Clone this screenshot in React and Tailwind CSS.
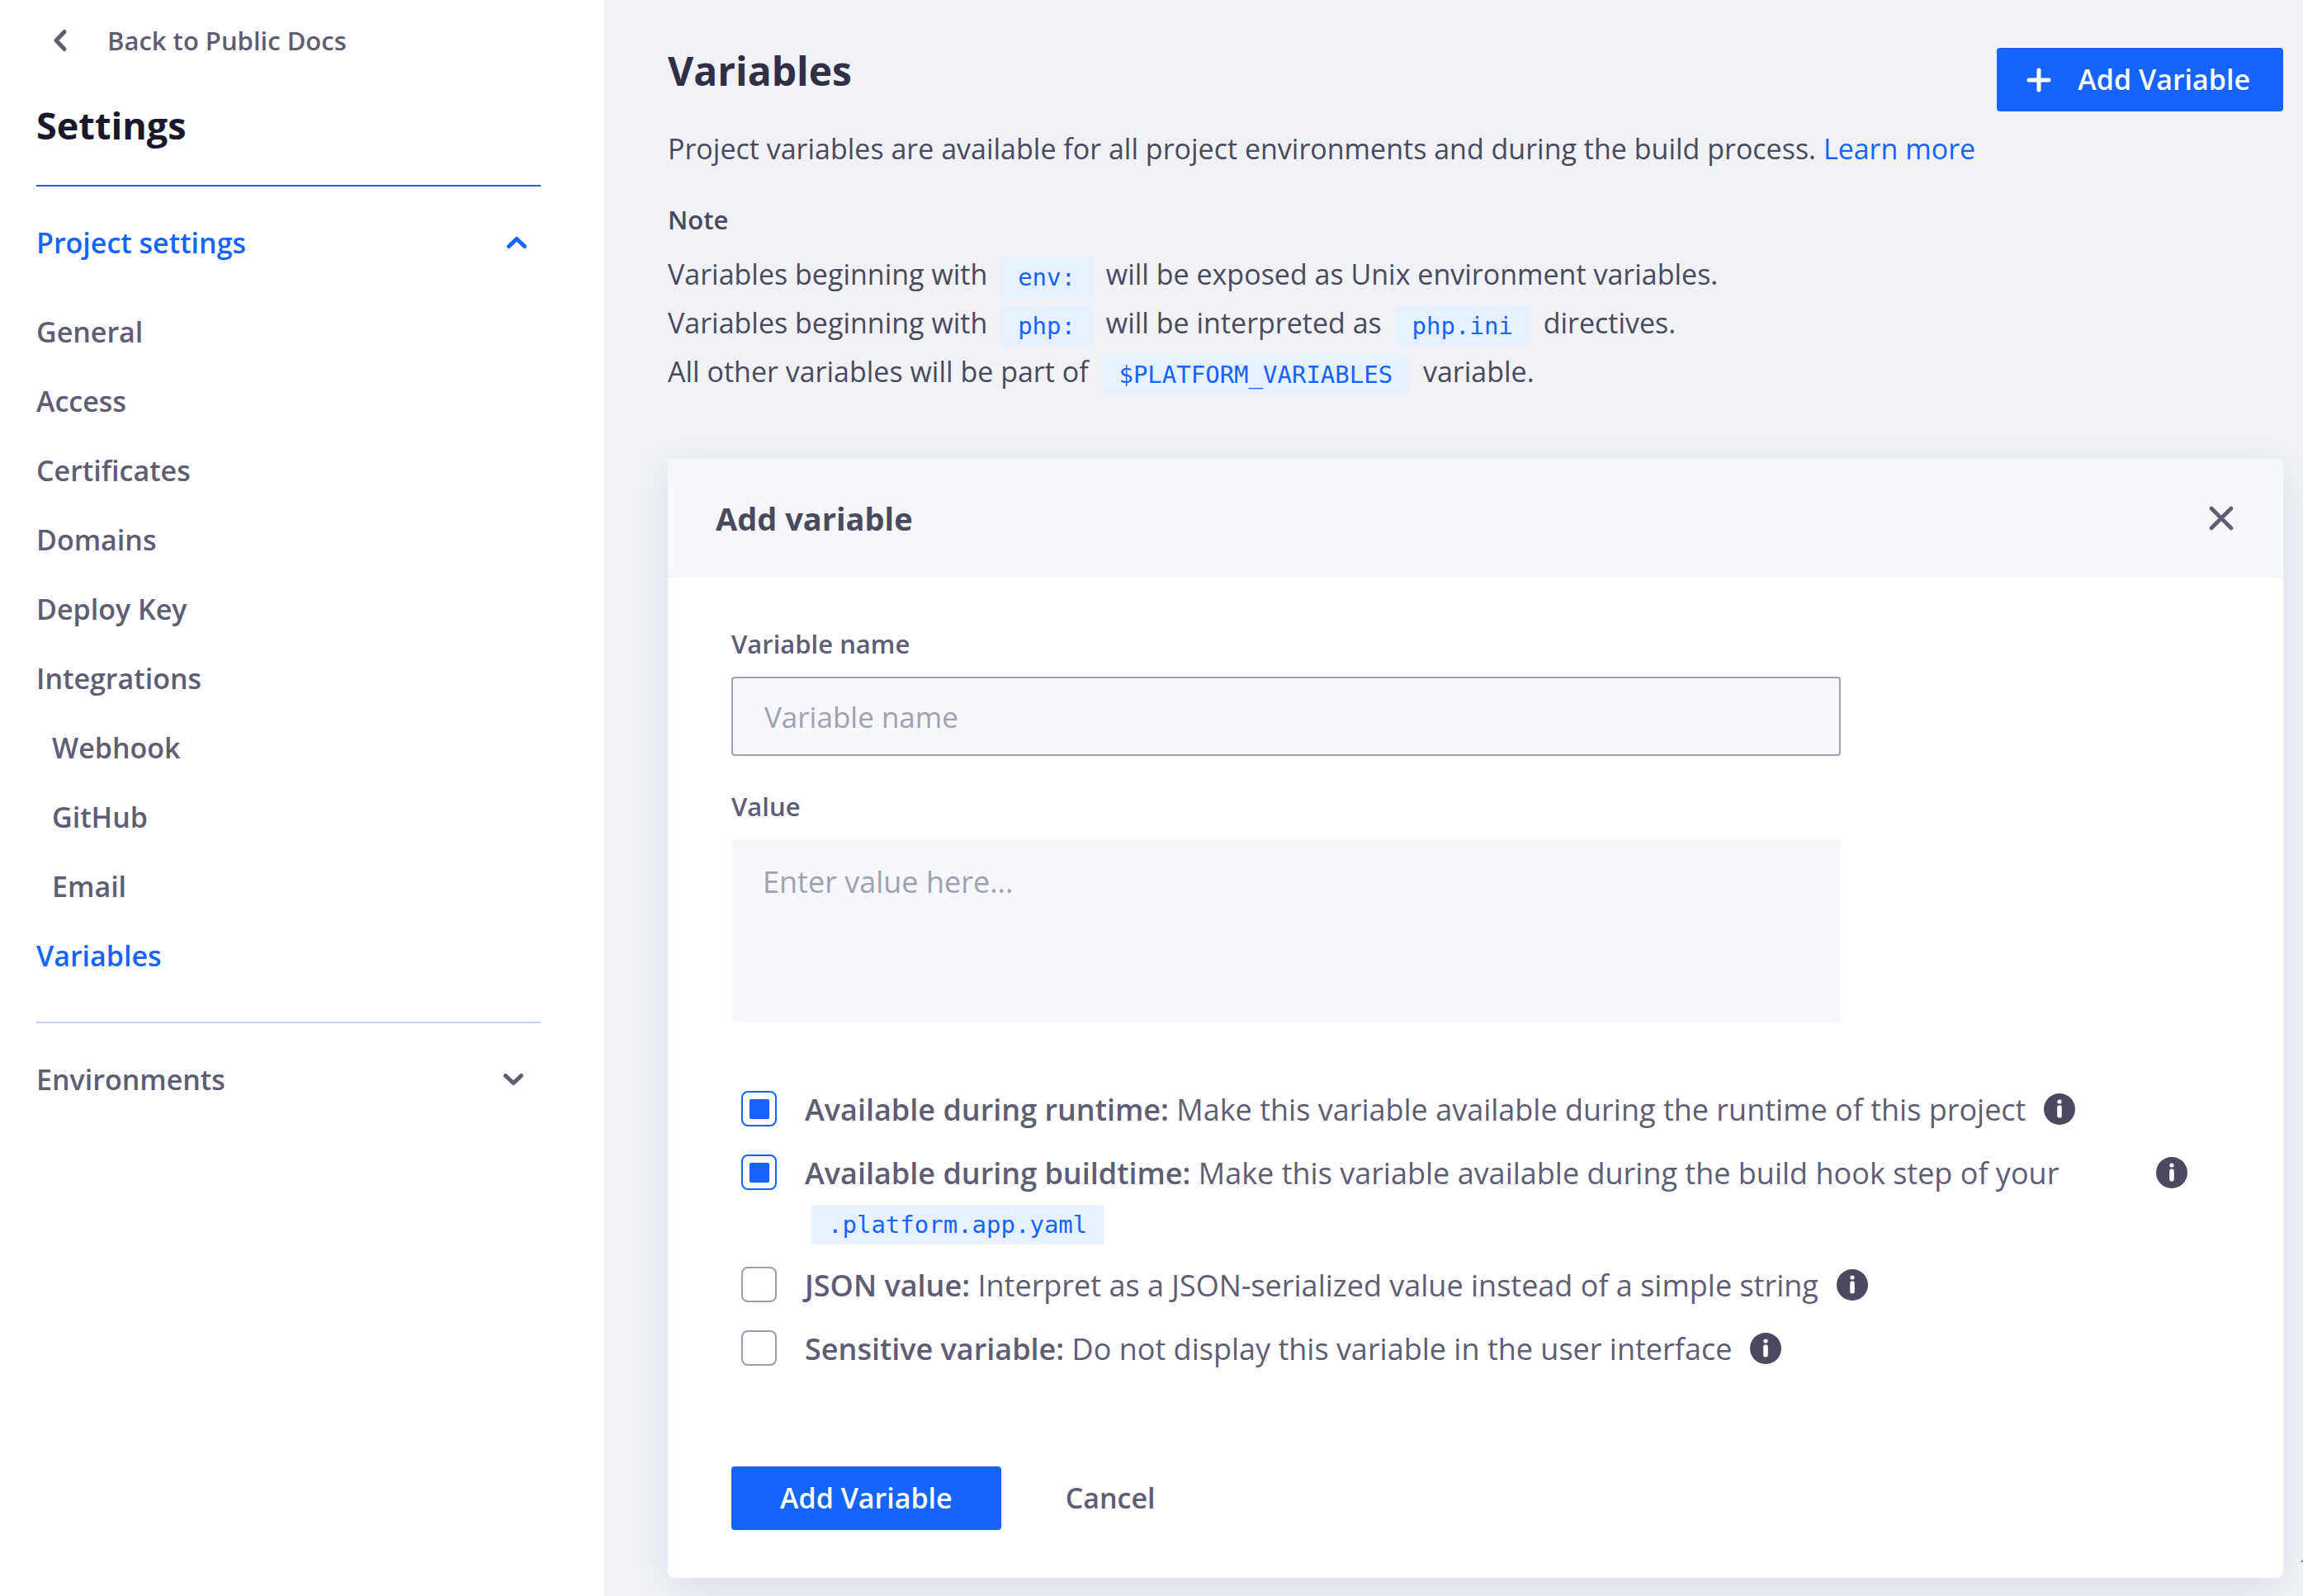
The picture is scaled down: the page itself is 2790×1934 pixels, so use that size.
const navItems = [
  { label: "General" },
  { label: "Access" },
  { label: "Certificates" },
  { label: "Domains" },
  { label: "Deploy Key" },
  { label: "Integrations" },
  { label: "Webhook", nested: true },
  { label: "GitHub", nested: true },
  { label: "Email", nested: true },
  { label: "Variables", active: true },
];

const options = [
  { id: "runtime", title: "Available during runtime:", text: "Make this variable available during the runtime of this project", checked: true },
  { id: "buildtime", title: "Available during buildtime:", text: "Make this variable available during the build hook step of your", code: ".platform.app.yaml", checked: true },
  { id: "json", title: "JSON value:", text: "Interpret as a JSON-serialized value instead of a simple string" },
  { id: "sensitive", title: "Sensitive variable:", text: "Do not display this variable in the user interface" },
];

function Code({ children }) {
  return (
    <code className="mx-2 inline-block rounded-[4px] bg-[#e6f0ff] px-5 align-middle font-['DejaVu_Sans_Mono',monospace] text-[29px] leading-[48px] text-[#1564ff]">
      {children}
    </code>
  );
}

function Chevron({ className }) {
  return (
    <svg viewBox="0 0 26 16" className={className} fill="none" stroke="currentColor" strokeWidth="5" strokeLinecap="round" strokeLinejoin="round" aria-hidden="true">
      <path d="M3.5 12.5 L13 3.5 L22.5 12.5" />
    </svg>
  );
}

function InfoIcon() {
  return (
    <svg viewBox="0 0 38 38" className="size-[38px]" aria-hidden="true">
      <circle cx="19" cy="19" r="19" fill="#4a495e" />
      <circle cx="19" cy="10" r="2.6" fill="#fff" />
      <rect x="16.2" y="14.5" width="5.6" height="15" rx="2.2" fill="#fff" />
    </svg>
  );
}

function Sidebar() {
  return (
    <aside className="w-[732px] shrink-0 bg-white pr-[77px] pl-11 text-[34px] font-semibold text-[#5e5d73]">
      <a href="#docs" className="flex items-center pt-6 pl-5 text-[31px] leading-[50px] font-semibold">
        <svg viewBox="0 0 18 30" className="mr-12 h-[30px] w-[18px]" fill="none" stroke="currentColor" strokeWidth="5" strokeLinecap="round" strokeLinejoin="round" aria-hidden="true">
          <path d="M14 4.5 L4 15 L14 25.5" />
        </svg>
        Back to Public Docs
      </a>
      <h1 className="pt-12 pb-[42px] text-[45px] leading-[60px] font-bold text-[#1a192b]">Settings</h1>
      <section className="border-t-2 border-[#1564ff]">
        <button type="button" aria-expanded="true" className="flex w-full items-center justify-between pt-11 pr-4 text-left leading-12 font-semibold text-[#1564ff]">
          Project settings
          <Chevron className="h-4 w-[26px]" />
        </button>
        <nav className="pt-[42px] pb-[38px]">
          {navItems.map((item) => (
            <a
              key={item.label}
              href={"#" + item.label}
              className={
                "block leading-[84px] " +
                (item.nested ? "pl-[19px] " : "") +
                (item.active ? "text-[#1564ff]" : "")
              }
            >
              {item.label}
            </a>
          ))}
        </nav>
      </section>
      <section className="border-t-2 border-[#c9d0e4]">
        <button type="button" aria-expanded="false" className="flex w-full items-center justify-between pt-11 pr-5 text-left leading-12 font-semibold">
          Environments
          <Chevron className="h-4 w-[26px] rotate-180" />
        </button>
      </section>
    </aside>
  );
}

function OptionRow({ option }) {
  return (
    <div className="flex items-start">
      <input
        id={option.id}
        type="checkbox"
        defaultChecked={option.checked}
        className="mt-[17px] mr-[34px] grid size-[43px] shrink-0 appearance-none place-items-center rounded-[8px] border-2 border-[#98a0ae] before:size-6 before:rounded-[2px] checked:border-[#1564ff] checked:before:bg-[#1564ff]"
      />
      <label htmlFor={option.id} className="pt-[9px] pb-[7px] leading-[61px]">
        <span className="font-semibold">{option.title}</span> {option.text}
        {option.code && <span className="-mt-[2px] block"><Code>{option.code}</Code></span>}
      </label>
      <button type="button" aria-label={"About " + option.title} className={option.code ? "mt-5 ml-[118px]" : "mt-5 ml-[22px]"}>
        <InfoIcon />
      </button>
    </div>
  );
}

export default function App() {
  return (
    <div className="relative flex min-h-screen bg-[#f0f2f6] font-['Open_Sans',sans-serif]">
      <Sidebar />
      <main className="min-w-0 grow pt-[58px] pr-6 pb-[22px] pl-[77px] text-[34px] text-[#4a495e]">
        <header className="flex items-start justify-between">
          <h2 className="text-[48px] leading-[56px] font-bold text-[#312f45]">Variables</h2>
          <button type="button" className="flex h-[77px] items-center gap-8 rounded-[4px] bg-[#1564ff] pr-10 pl-9 font-semibold text-white">
            <svg viewBox="0 0 30 30" className="size-[30px]" fill="none" stroke="currentColor" strokeWidth="5" strokeLinecap="round" aria-hidden="true">
              <path d="M15 3 V27 M3 15 H27" />
            </svg>
            Add Variable
          </button>
        </header>
        <p className="mt-4 leading-[58px]">
          Project variables are available for all project environments and during the build process.{" "}
          <a href="#learn" className="text-[#1564ff]">Learn more</a>
        </p>
        <h3 className="mt-[28px] text-[31px] leading-[58px] font-semibold">Note</h3>
        <div className="mt-2 leading-[59px]">
          <p>Variables beginning with <Code>env:</Code> will be exposed as Unix environment variables.</p>
          <p>Variables beginning with <Code>php:</Code> will be interpreted as <Code>php.ini</Code> directives.</p>
          <p>All other variables will be part of <Code>$PLATFORM_VARIABLES</Code> variable.</p>
        </div>
        <form className="mt-[76px] overflow-hidden rounded-[8px] bg-white text-[#5e5d73] shadow-[0_12px_48px_rgba(75,97,128,0.12)]">
          <div className="flex h-36 items-center justify-between bg-[#f5f7fb] px-[58px]">
            <h3 className="text-[38px] font-bold text-[#4a495e]">Add variable</h3>
            <button type="button" aria-label="Close" className="text-[#5e5d73]">
              <svg viewBox="0 0 34 34" className="size-[34px]" fill="none" stroke="currentColor" strokeWidth="4.6" strokeLinecap="round" aria-hidden="true">
                <path d="M5 5 L29 29 M29 5 L5 29" />
              </svg>
            </button>
          </div>
          <div className="px-[77px] pt-14 pb-[58px]">
            <label htmlFor="name" className="block text-[31px] leading-12 font-semibold">Variable name</label>
            <input id="name" type="text" placeholder="Variable name" className="mt-4 block h-24 w-full max-w-[1344px] rounded-[4px] border-2 border-[#98a0ae] bg-[#f5f7fb] px-[38px] text-[35px] placeholder:text-[#a1a1b1]" />
            <label htmlFor="value" className="mt-[37px] block text-[31px] leading-12 font-semibold">Value</label>
            <textarea id="value" placeholder="Enter value here..." className="mt-4 block h-[221px] w-full max-w-[1344px] resize-none rounded-[4px] bg-[#f5f7fb] px-[38px] py-6 text-[36px] leading-[56px] placeholder:text-[#a1a1b1]" />
            <div className="mt-[67px] pl-3 text-[36px]">
              {options.map((option) => <OptionRow key={option.id} option={option} />)}
            </div>
            <div className="mt-[105px] flex items-center text-[34px] font-semibold">
              <button type="submit" className="h-[77px] rounded-[4px] bg-[#1564ff] px-[59px] font-semibold text-white">Add Variable</button>
              <button type="button" className="ml-[78px] font-semibold">Cancel</button>
            </div>
          </div>
        </form>
      </main>
      <svg viewBox="0 0 4 4" className="absolute right-0 bottom-[41px] size-1" aria-hidden="true">
        <path d="M0 4 L4 0 V4 Z" fill="#9d9ea5" />
      </svg>
    </div>
  );
}
